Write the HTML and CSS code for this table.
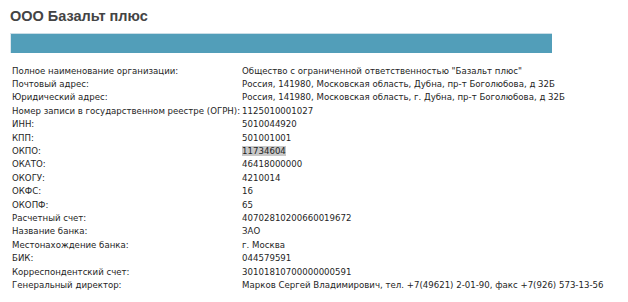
FILE: index.html
```html
<!DOCTYPE html>
<html lang="ru">
<head>
<meta charset="utf-8">
<link rel="stylesheet" href="styles.css">
</head>
<body>
<div class="page">
  <h1 class="title">ООО Базальт плюс</h1>
  <div class="bar"></div>
  <table class="info">
    <tr><td class="k">Полное наименование организации:</td><td class="v">Общество с ограниченной ответственностью "Базальт плюс"</td></tr>
    <tr><td class="k">Почтовый адрес:</td><td class="v">Россия, 141980, Московская область, Дубна, пр-т Боголюбова, д 32Б</td></tr>
    <tr><td class="k">Юридический адрес:</td><td class="v">Россия, 141980, Московская область, г. Дубна, пр-т Боголюбова, д 32Б</td></tr>
    <tr><td class="k">Номер записи в государственном реестре (ОГРН):</td><td class="v">1125010001027</td></tr>
    <tr><td class="k">ИНН:</td><td class="v">5010044920</td></tr>
    <tr><td class="k">КПП:</td><td class="v">501001001</td></tr>
    <tr><td class="k">ОКПО:</td><td class="v"><span class="sel">11734604</span></td></tr>
    <tr><td class="k">ОКАТО:</td><td class="v">46418000000</td></tr>
    <tr><td class="k">ОКОГУ:</td><td class="v">4210014</td></tr>
    <tr><td class="k">ОКФС:</td><td class="v">16</td></tr>
    <tr><td class="k">ОКОПФ:</td><td class="v">65</td></tr>
    <tr><td class="k">Расчетный счет:</td><td class="v">40702810200660019672</td></tr>
    <tr><td class="k">Название банка:</td><td class="v">ЗАО</td></tr>
    <tr><td class="k">Местонахождение банка:</td><td class="v">г. Москва</td></tr>
    <tr><td class="k">БИК:</td><td class="v">044579591</td></tr>
    <tr><td class="k">Корреспондентский счет:</td><td class="v">30101810700000000591</td></tr>
    <tr><td class="k">Генеральный директор:</td><td class="v">Марков Сергей Владимирович, тел. +7(49621) 2-01-90, факс +7(926) 573-13-56</td></tr>
  </table>
</div>
</body>
</html>
```

FILE: styles.css
```css
html, body {
  margin: 0;
  padding: 0;
  background: #ffffff;
}
.page {
  padding: 8px 0 0 10px;
  font-family: "DejaVu Sans", Verdana, sans-serif;
  color: #1e1e1e;
}
.title {
  margin: 0;
  font-family: "Liberation Sans", Arial, sans-serif;
  font-size: 14.5px;
  line-height: 17px;
  font-weight: bold;
  color: #444444;
}
.bar {
  margin-top: 8px;
  width: 542px;
  height: 20px;
  box-sizing: border-box;
  background: #529eb9;
  border-top: 1px solid #c9dde6;
  border-left: 1px solid #dde8ee;
}
.info {
  margin-top: 11px;
  margin-left: 2px;
  border-collapse: collapse;
  font-size: 8.6px;
}
.info td {
  padding: 0;
  height: 13.4px;
  line-height: 12px;
  white-space: nowrap;
  vertical-align: middle;
}
.info .k {
  padding-right: 2px;
}
.sel {
  background: #c8c8c8;
}
```
